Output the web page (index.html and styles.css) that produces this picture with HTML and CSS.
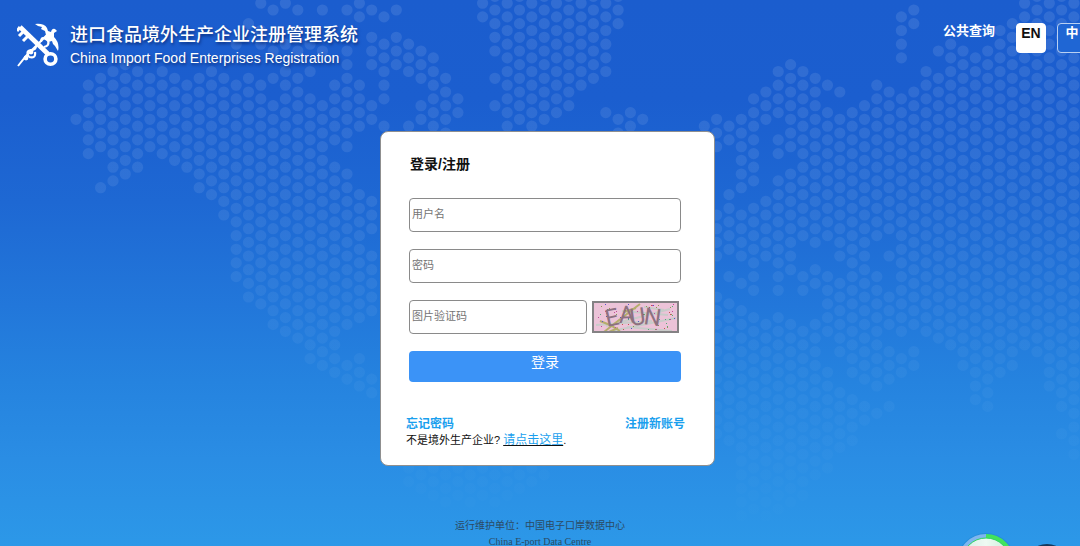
FILE: index.html
```html
<!DOCTYPE html>
<html lang="zh-CN">
<head>
<meta charset="utf-8">
<title>进口食品境外生产企业注册管理系统</title>
<link rel="stylesheet" href="styles.css">
</head>
<body>
<svg class="map" aria-hidden="true">
  <defs>
    <linearGradient id="fade" gradientUnits="userSpaceOnUse" x1="0" y1="0" x2="0" y2="546">
      <stop offset="0" stop-color="#fff" stop-opacity=".1"/>
      <stop offset=".35" stop-color="#fff" stop-opacity=".08"/>
      <stop offset=".75" stop-color="#fff" stop-opacity=".03"/>
      <stop offset="1" stop-color="#fff" stop-opacity="0"/>
    </linearGradient>
  </defs>
  <path id="dots" fill="url(#fade)"/>
</svg>

<header class="header">
  <div class="brand">
    <svg class="logo" viewBox="0 0 42 44" aria-hidden="true">
      <g fill="none" stroke="#fff">
        <path stroke-width="4.6" d="M3 4 L31 31"/>
        <path stroke-width="3" d="M3 4 L0 8 M6 9 L2 13 M11 13 L6 18"/>
        <ellipse cx="33.5" cy="36" rx="5.4" ry="5.2" stroke-width="3.6"/>
        <path stroke-width="2" d="M1 43 L9 33 L31 11"/>
        <path stroke-width="2.2" d="M12 34 Q8 28 14 27 Q19 27 19 23 M12 34 Q19 36 18 29 M24 19 Q24 13 29 16 M27 24 Q33 23 31 17"/>
      </g>
      <g fill="#fff">
        <path d="M18 1 Q27 0 30 5 L31 8 L34 9 Q35 5 38 6 L40 8 L37 10 L37 14 Q43 20 41 28 L38 23 L36 21 L35 18 L31 19 L27 16 L29 12 L28 8 L24 6 L25 4 L21 3 Z"/>
        <circle cx="9" cy="35" r="2.4"/>
        <circle cx="14" cy="29" r="2.4"/>
      </g>
    </svg>
    <div class="brand-text">
      <h1 class="brand-cn">进口食品境外生产企业注册管理系统</h1>
      <p class="brand-en">China Import Food Enterprises Registration</p>
    </div>
  </div>
  <nav class="nav">
    <a class="nav-link" href="#">公共查询</a>
    <button class="lang lang-active" type="button">EN</button>
    <button class="lang" type="button">中</button>
  </nav>
</header>

<main class="main">
  <section class="card">
    <h2 class="card-title">登录/注册</h2>
    <form class="form">
      <input class="field" type="text" placeholder="用户名" aria-label="用户名">
      <input class="field" type="password" placeholder="密码" aria-label="密码">
      <div class="captcha-row">
        <input class="field captcha-field" type="text" placeholder="图片验证码" aria-label="图片验证码">
        <svg class="captcha" viewBox="0 0 87 32" role="img" aria-label="验证码">
          <rect width="87" height="32" fill="#ecc3d8"/>
          <g fill="none" stroke="#c9cbc9" stroke-width="2">
            <path d="M14 25 L78 8 M20 30 L84 17 M30 10 L76 14 M4 24 L60 20 M35 26 L80 30 M52 6 L72 9"/>
          </g>
          <path d="M8 20 L18 24 L28 30 M12 31 L22 23 L44 6 L48 3 M32 11 L44 7 M17 31 L26 27" fill="none" stroke="#b5ad6c" stroke-width="2"/>
          <g id="specks"></g>
          <g class="captcha-text">
            <text x="15" y="26" transform="rotate(-12 15 26)">E</text>
            <text x="27" y="22" transform="rotate(-2 27 22)">A</text>
            <text x="39" y="25" transform="rotate(-8 39 25)">U</text>
            <text x="51" y="23" transform="rotate(8 51 23)">N</text>
          </g>
          <rect x="1" y="1" width="85" height="30" fill="none" stroke="#848284" stroke-width="2"/>
        </svg>
      </div>
      <button class="submit" type="submit">登录</button>
    </form>
    <div class="links">
      <div class="links-row">
        <a class="link" href="#">忘记密码</a>
        <a class="link" href="#">注册新账号</a>
      </div>
      <p class="hint">不是境外生产企业? <a class="hint-link" href="#">请点击这里</a>.</p>
    </div>
  </section>
</main>

<footer class="footer">
  <p class="footer-cn">运行维护单位：中国电子口岸数据中心</p>
  <p class="footer-en">China E-port Data Centre</p>
</footer>

<svg class="floating" viewBox="0 0 130 14" aria-hidden="true">
  <defs>
    <linearGradient id="ball" x1="0" x2="1"><stop offset="0" stop-color="#d3eee6"/><stop offset=".5" stop-color="#eefaf2"/><stop offset="1" stop-color="#c8eeda"/></linearGradient>
  </defs>
  <circle cx="31" cy="30" r="29" fill="#1c7fc8" opacity=".4"/>
  <circle cx="31" cy="30" r="24" fill="url(#ball)"/>
  <path d="M5 30 A26 26 0 0 1 31 4" fill="none" stroke="#7fb6ee" stroke-width="4"/>
  <path d="M31 4 A26 26 0 0 1 57 30" fill="none" stroke="#42e35c" stroke-width="4"/>
  <circle cx="31" cy="30" r="24" fill="none" stroke="#35d860" stroke-width="1"/>
  <circle cx="92" cy="35" r="23" fill="#16385c"/>
</svg>
<script src="map.js"></script>
</body>
</html>
```
FILE: styles.css
```css
* { box-sizing: border-box; }

body {
  margin: 0;
  height: 100vh;
  overflow: hidden;
  display: flex;
  flex-direction: column;
  font-family: "Liberation Sans", "Noto Sans CJK SC", sans-serif;
  background: linear-gradient(#1b5dce 0%, #1b5ecf 18%, #1e68d3 37%, #2277da 56%, #2583df 70%, #2a8de4 84%, #2c98e8 100%);
}

h1, h2, p { margin: 0; }
a { text-decoration: none; }
button, input { font-family: inherit; }

.map {
  position: absolute;
  inset: 0;
  width: 100%;
  height: 100%;
  z-index: -1;
}

.header {
  display: flex;
  justify-content: space-between;
  align-items: flex-start;
  margin-right: -7px;
  padding: 23px 0 0 17px;
}

.brand { display: flex; gap: 11px; }
.logo { width: 42px; height: 44px; }

.brand-text {
  color: #fff;
  text-shadow: 1px 2px 3px rgba(0, 20, 80, .6);
}
.brand-cn { font-size: 18px; line-height: 24px; font-weight: 500; white-space: nowrap; }
.brand-en { font-size: 14px; line-height: 22px; white-space: nowrap; }

.nav { display: flex; align-items: flex-start; }
.nav-link {
  margin-right: 21px;
  color: #fff;
  font-size: 13px;
  line-height: 16px;
  font-weight: 700;
}
.lang {
  display: flex;
  justify-content: center;
  width: 30px;
  height: 30px;
  margin-right: 11px;
  padding: 0;
  border: 1px solid #b9d0f2;
  border-radius: 4px;
  background: #1f66d4;
  color: #fff;
  font-size: 13px;
  line-height: 18px;
  font-weight: 700;
}
.lang:last-child { margin-right: 0; }
.lang-active { background: #fff; border-color: #fff; color: #111; font-size: 14px; }

.main {
  display: flex;
  justify-content: center;
  padding: 62px 0 0 15px;
}

.card {
  width: 335px;
  padding: 22px 25px 17px;
  background: #fff;
  border: 1px solid #8f8f8f;
  border-radius: 8px;
}
.card-title { padding: 0 4px; font-size: 14px; line-height: 20px; font-weight: 700; color: #111; }

.form {
  display: flex;
  flex-direction: column;
  gap: 17px;
  padding: 24px 8px 0 3px;
}
.field {
  width: 100%;
  height: 34px;
  padding: 0 2px 2px;
  border: 1px solid #8a8a8a;
  border-radius: 4px;
  background: #fff;
  font-size: 11px;
}
.field::placeholder { color: #757575; }

.captcha-row { display: flex; align-items: center; gap: 5px; }
.captcha-field { flex: 1; min-width: 0; }
.captcha { width: 87px; height: 32px; margin-right: 2px; }
.captcha-text {
  font-family: Roboto, sans-serif;
  font-size: 24px;
  font-weight: 400;
  fill: #8d7180;
}

.submit {
  display: flex;
  justify-content: center;
  height: 31px;
  padding: 1px 0;
  border: 0;
  border-radius: 4px;
  background: #3b93f7;
  color: #fff;
  font-size: 14px;
  line-height: 20px;
}

.links { padding: 34px 4px 0 0; }
.links-row { display: flex; justify-content: space-between; }
.link { color: #1a9fee; font-size: 12px; line-height: 16px; font-weight: 700; }
.hint { color: #111; font-size: 11px; line-height: 16px; }
.hint-link { color: #1a9fee; font-size: 12px; text-decoration: underline #111; }

.footer { padding-top: 52px; text-align: center; color: #2b4a63; font-size: 10px; line-height: 16px; }
.footer-en { font-family: "Liberation Serif", serif; }

.floating {
  position: fixed;
  right: -5px;
  bottom: 0;
  width: 130px;
  height: 14px;
}
```
FILE: map.js
```js
// Each entry is a dot column: [column index, top, bottom, top, bottom, ...]
const columns = [
  [0,119,119],[1,85,153],[2,78,146,187,187],[3,71,180],[4,65,174],[5,71,167],[6,78,146],[7,71,153],
  [8,78,160],[9,85,167],[10,78,187],[11,71,194],[12,78,215],[13,43,43,85,277],[14,23,23,78,297],
  [15,3,3,30,43,85,304],[16,9,9,50,50,78,78,105,324],[17,3,3,43,43,71,331],[18,9,9,50,50,78,338],
  [19,43,43,71,71,99,359],[20,9,9,50,50,105,365],[21,85,140,167,372],[22,9,9,50,64,78,146,173,324,365,379],
  [23,3,16,85,126,194,317,359,386],[24,9,9,37,64,105,119,201,229,256,311,379,393],[25,16,16,43,99,126,126],
  [26,9,9,37,64],[27,43,71,126,126,460,475],[28,50,78,105,119,460,485],[29,57,126,460,490],[30,78,132,460,500],
  [31,99,112,460,500],[32,460,500],[33,3,16,460,500],[34,-4,50,78,78,105,105,460,500],[35,3,126,460,490],
  [36,-4,119,460,490],[37,3,126,460,480],[38,-4,119,460,480],[39,3,112],[40,-4,105],[41,3,85],[42,-4,78],
  [43,3,71,112,112],[44,-4,23,119,132],[45,112,126],[46,119,119],[51,126,126],
  [52,119,147,215,256,297,432],[53,126,140,194,249,277,277,304,447],[54,119,187,215,256,290,290,311,510],
  [55,99,181,208,290,317,515],[56,92,119,201,256,324,515],[57,71,112,140,153,181,290,317,510],
  [58,65,147,174,270,324,500],[59,71,236,277,290,331,490],[60,78,242,270,283,324,480],
  [61,85,85,112,236,277,331,372,465],[62,92,92,119,256,283,352,393,450],[63,112,372,400,441],
  [64,106,379,407,420],[65,85,236,277,386,413,413],[66,92,229,256,256,297,324,352,379,407,407],
  [67,16,57,99,331,358,372],[68,9,23,92,324,352,365],[69,71,331],[70,54,54,78,338],[71,44,345],[72,50,365],
  [73,57,400],[74,50,407],[75,30,372],[76,23,365],[77,3,345],[78,-4,352],[79,3,386],[80,-4,407,434,434],[81,3,457]
];

const stepX = 12.32, stepY = 13.67, r = 5.6;
let d = "";
for (const [i, ...ranges] of columns) {
  const x = 76 + i * stepX;
  const base = i % 2 ? 3.2 : -3.7;
  for (let k = 0; k < ranges.length; k += 2) {
    const first = Math.round((ranges[k] - base) / stepY);
    const last = Math.round((ranges[k + 1] - base) / stepY);
    for (let n = first; n <= last; n++) {
      const y = base + n * stepY;
      d += `M${(x - r).toFixed(1)} ${y.toFixed(1)}a${r} ${r} 0 1 0 ${2 * r} 0a${r} ${r} 0 1 0 ${-2 * r} 0`;
    }
  }
}
document.getElementById("dots").setAttribute("d", d);

// Coloured noise over the captcha
const colours = ["#5a55c8", "#c04a9a", "#58a878", "#c85050", "#8c9a50"];
let seed = 7;
const next = (limit) => {
  seed = (seed * 16807) % 2147483647;
  return seed % limit;
};
let specks = "";
for (let n = 0; n < 65; n++) {
  specks += `<rect x="${3 + next(81)}" y="${3 + next(26)}" width="1" height="1" fill="${colours[n % 5]}"/>`;
}
document.getElementById("specks").innerHTML = specks;
```
